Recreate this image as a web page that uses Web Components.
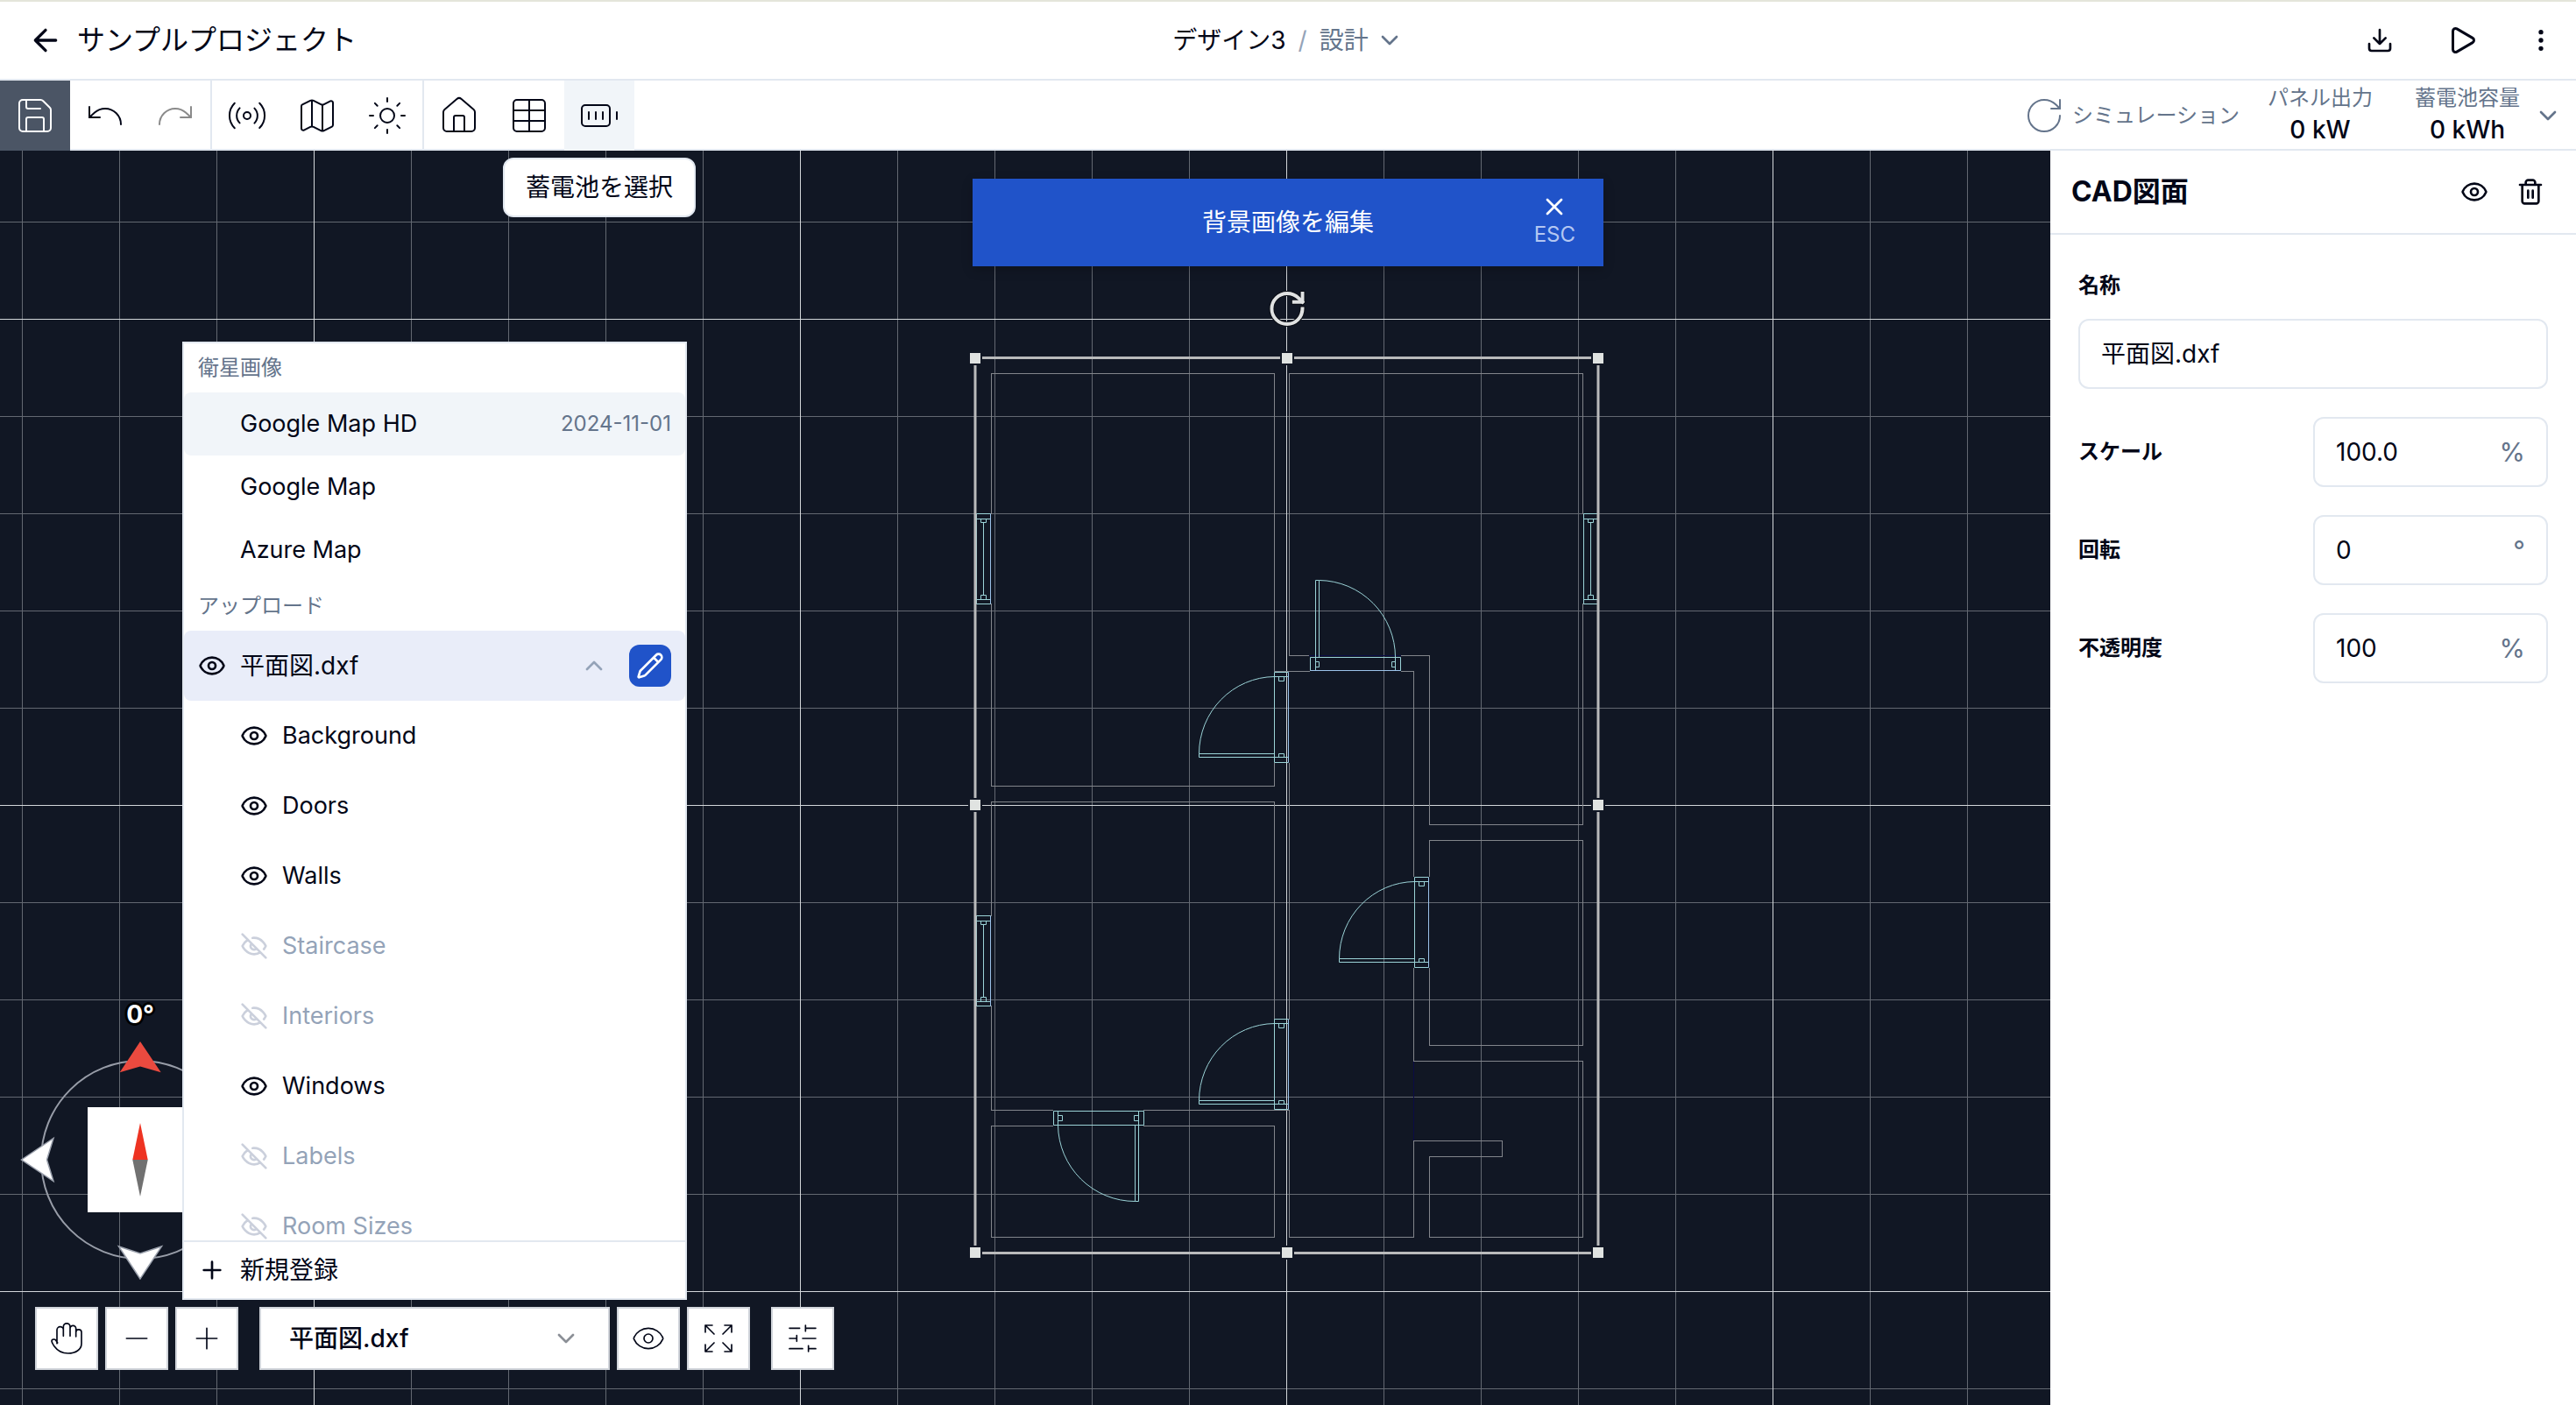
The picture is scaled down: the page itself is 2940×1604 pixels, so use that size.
<!DOCTYPE html>
<html lang="ja">
<head>
<meta charset="utf-8">
<title>サンプルプロジェクト</title>
<style>
  html, body { margin: 0; height: 100%; }
  body {
    --line: #e2e8f0;
    --muted: #64748b;
    --ink: #020617;
    --accent: #2053c9;
    --night: #111724;
    font-family: Inter, "Noto Sans CJK JP", sans-serif;
    font-size: 28px;
    line-height: 40px;
    color: var(--ink);
    background: #fff;
    overflow: hidden;
  }
</style>
</head>
<body>
<design-app></design-app>
<script>
const define = (name, html, setup) => {
  const tpl = document.createElement('template');
  tpl.innerHTML = html;
  customElements.define(name, class extends HTMLElement {
    constructor() {
      super();
      this.attachShadow({ mode: 'open' }).append(tpl.content.cloneNode(true));
    }
    connectedCallback() { if (setup) setup(this, this.shadowRoot); }
  });
};

const RESET = `*{box-sizing:border-box}
  button,input,select{font:inherit;color:inherit;margin:0;padding:0;border:0;background:none}
  button{display:flex;align-items:center;justify-content:center}
  h1,h2,p{margin:0;font:inherit}`;

const ICONS = {
  back: '<path d="m12 19-7-7 7-7M19 12H5"/>',
  chevronDown: '<path d="m6 9 6 6 6-6"/>',
  chevronUp: '<path d="m18 15-6-6-6 6"/>',
  download: '<path d="M21 15v4a2 2 0 0 1-2 2H5a2 2 0 0 1-2-2v-4M7 10l5 5 5-5M12 15V3"/>',
  play: '<path d="M5 5a2 2 0 0 1 3.008-1.728l11.997 6.998a2 2 0 0 1 .003 3.458l-12 7A2 2 0 0 1 5 19z"/>',
  more: '<circle cx="12" cy="5" r="1"/><circle cx="12" cy="12" r="1"/><circle cx="12" cy="19" r="1"/>',
  save: '<path d="M15.2 3a2 2 0 0 1 1.4.6l3.8 3.8a2 2 0 0 1 .6 1.4V19a2 2 0 0 1-2 2H5a2 2 0 0 1-2-2V5a2 2 0 0 1 2-2z"/><path d="M17 21v-7a1 1 0 0 0-1-1H8a1 1 0 0 0-1 1v7M7 3v4a1 1 0 0 0 1 1h7"/>',
  undo: '<path d="M3 7v6h6"/><path d="M21 17a9 9 0 0 0-9-9 9 9 0 0 0-6 2.3L3 13"/>',
  redo: '<path d="M21 7v6h-6"/><path d="M3 17a9 9 0 0 1 9-9 9 9 0 0 1 6 2.3l3 2.7"/>',
  radio: '<path d="M4.9 19.1C1 15.2 1 8.8 4.9 4.9M7.8 16.2c-2.3-2.3-2.3-6.1 0-8.5"/><circle cx="12" cy="12" r="2"/><path d="M16.2 7.8c2.3 2.3 2.3 6.1 0 8.5M19.1 4.9C23 8.8 23 15.1 19.1 19"/>',
  map: '<path d="M14.106 5.553a2 2 0 0 0 1.788 0l3.659-1.83A1 1 0 0 1 21 4.619v12.764a1 1 0 0 1-.553.894l-4.553 2.277a2 2 0 0 1-1.788 0l-4.212-2.106a2 2 0 0 0-1.788 0l-3.659 1.83A1 1 0 0 1 3 19.381V6.618a1 1 0 0 1 .553-.894l4.553-2.277a2 2 0 0 1 1.788 0zM15 5.764v15M9 3.236v15"/>',
  sun: '<circle cx="12" cy="12" r="4"/><path d="M12 2v2M12 20v2M4.93 4.93l1.41 1.41M17.66 17.66l1.41 1.41M2 12h2M20 12h2M6.34 17.66l-1.41 1.41M19.07 4.93l-1.41 1.41"/>',
  house: '<path d="M15 21v-8a1 1 0 0 0-1-1h-4a1 1 0 0 0-1 1v8"/><path d="M3 10a2 2 0 0 1 .709-1.528l7-5.999a2 2 0 0 1 2.582 0l7 5.999A2 2 0 0 1 21 10v9a2 2 0 0 1-2 2H5a2 2 0 0 1-2-2z"/>',
  table: '<rect x="3" y="3" width="18" height="18" rx="2"/><path d="M12 3v18M3 9h18M3 15h18"/>',
  battery: '<rect x="2" y="6" width="16" height="12" rx="2"/><path d="M6 10v4M10 10v4M14 10v4M22 10v4"/>',
  rotate: '<path d="M21 12a9 9 0 1 1-9-9c2.52 0 4.93 1 6.74 2.74L21 8"/><path d="M21 3v5h-5"/>',
  eye: '<path d="M2.062 12.348a1 1 0 0 1 0-.696 10.75 10.75 0 0 1 19.876 0 1 1 0 0 1 0 .696 10.75 10.75 0 0 1-19.876 0"/><circle cx="12" cy="12" r="3"/>',
  eyeOff: '<path d="M9.88 9.88a3 3 0 1 0 4.24 4.24M10.73 5.08A10.43 10.43 0 0 1 12 5c7 0 10 7 10 7a13.16 13.16 0 0 1-1.67 2.68M6.61 6.61A13.526 13.526 0 0 0 2 12s3 7 10 7a9.74 9.74 0 0 0 5.39-1.61M2 2l20 20"/>',
  trash: '<path d="M3 6h18M19 6v14c0 1-1 2-2 2H7c-1 0-2-1-2-2V6M8 6V4c0-1 1-2 2-2h4c1 0 2 1 2 2v2M10 11v6M14 11v6"/>',
  pencil: '<path d="M21.174 6.812a1 1 0 0 0-3.986-3.987L3.842 16.174a2 2 0 0 0-.5.83l-1.321 4.352a.5.5 0 0 0 .623.622l4.353-1.32a2 2 0 0 0 .83-.497zM15 5l4 4"/>',
  close: '<path d="M18 6 6 18M6 6l12 12"/>',
  plus: '<path d="M5 12h14M12 5v14"/>',
  minus: '<path d="M5 12h14"/>',
  expand: '<path d="m15 15 6 6M15 9l6-6M21 16.2V21h-4.8M21 7.8V3h-4.8M3 16.2V21h4.8M3 21l6-6M3 7.8V3h4.8M9 9 3 3"/>',
  sliders: '<path d="M10 5H3M12 19H3M14 3v4M16 17v4M21 12h-9M21 19h-5M21 5h-7M8 10v4M8 12H3"/>',
  hand: '<g transform="translate(1.2 1.2) scale(.2) translate(-115 -1140)" stroke-width="5"><path d="M136 1211V1165a11 11 0 0 1 22 0V1186M158 1166V1154a11.500 11.500 0 0 1 23 0V1186M181 1160a10 10 0 0 1 20 0V1188M201 1173a9.500 9.500 0 0 1 19 0V1212c0 20-20 33-46 33-24 0-37-10-47-24-6-9-9-15-9-19 0-5 10-7 14-2l6 9"/></g>'
};

/* <ui-icon name size stroke> : line icon on a 24-unit grid */
define('ui-icon', `<style>:host{display:block;flex:none}svg{display:block;fill:none;stroke:currentColor;stroke-linecap:round;stroke-linejoin:round}</style>`,
  (el, root) => {
    const size = el.getAttribute('size') || 32;
    root.querySelector('svg')?.remove();
    root.innerHTML += `<svg width="${size}" height="${size}" viewBox="0 0 24 24" stroke-width="${el.getAttribute('stroke') || 2}" aria-hidden="true">${ICONS[el.getAttribute('name')]}</svg>`;
  });

define('app-header', `<style>${RESET}
  :host{display:grid;grid-template-columns:1fr auto 1fr;align-items:center;height:92px;box-sizing:border-box;border-top:2px solid #e4e5da;border-bottom:2px solid var(--line);padding:0 24px}
  .left,.crumbs,.right{display:flex;align-items:center}
  .left{gap:16px;padding-left:8px}
  h1{font-size:32px}
  .crumbs{gap:14px}
  .sep{color:#94a3b8}
  .stage{gap:8px;color:var(--muted)}
  .right{justify-content:flex-end;gap:56px}
  .right button:first-child{margin-right:4px}
</style>
<div class="left"><button aria-label="戻る"><ui-icon name="back" size="40"></ui-icon></button><h1>サンプルプロジェクト</h1></div>
<nav class="crumbs"><span>デザイン3</span><span class="sep">/</span><button class="stage">設計<ui-icon name="chevronDown"></ui-icon></button></nav>
<div class="right">
  <button aria-label="ダウンロード"><ui-icon name="download"></ui-icon></button>
  <button aria-label="再生"><ui-icon name="play" size="36"></ui-icon></button>
  <button aria-label="メニュー"><ui-icon name="more"></ui-icon></button>
</div>`);

define('tool-button', `<style>${RESET}
  :host{display:block;position:relative}
  button{width:80px;height:80px}
  :host([kind=primary]) button{background:#4b5565;color:#fff}
  :host([kind=active]) button{background:#f1f5f9}
  :host([kind=off]) button{color:#8a8a8a}
  .tip{position:absolute;z-index:5;top:88px;left:50%;transform:translateX(-50%);white-space:nowrap;background:#fff;border:2px solid var(--line);border-radius:12px;padding:12px 24px}
  .tip:not(.on){display:none}
</style><button><ui-icon size="48" stroke="1"></ui-icon></button><div class="tip" role="tooltip"><slot></slot></div>`,
  (el, root) => {
    root.querySelector('ui-icon').setAttribute('name', el.getAttribute('icon'));
    root.querySelector('button').setAttribute('aria-label', el.getAttribute('label'));
    const icon = root.querySelector('ui-icon');
    icon.replaceWith(icon.cloneNode(true));
    root.querySelector('.tip').classList.toggle('on', el.hasAttribute('tip'));
  });

define('stat-item', `<style>:host{display:flex;flex-direction:column;align-items:center}
  .name{font-size:24px;line-height:32px;color:var(--muted)}
  .value{font-weight:500;line-height:40px}</style>
  <span class="name"><slot name="name"></slot></span><span class="value"><slot></slot></span>`);

define('tool-bar', `<style>${RESET}
  :host{display:flex;justify-content:space-between;height:80px;box-shadow:inset 0 -2px var(--line)}
  .tools,.group,.info{display:flex}
  .group + .group{border-left:2px solid var(--line)}
  .info{align-items:center;padding-right:16px}
  .sim{gap:8px;font-size:24px;color:var(--muted);margin-right:32px}
  .stats{display:flex;gap:48px;margin-right:16px}
  .more{color:var(--muted)}
</style>
<div class="tools">
  <div class="group"><tool-button icon="save" label="保存" kind="primary"></tool-button><tool-button icon="undo" label="元に戻す"></tool-button><tool-button icon="redo" label="やり直す" kind="off"></tool-button></div>
  <div class="group"><tool-button icon="radio" label="電波"></tool-button><tool-button icon="map" label="地図"></tool-button><tool-button icon="sun" label="日射"></tool-button></div>
  <div class="group"><tool-button icon="house" label="建物"></tool-button><tool-button icon="table" label="パネル"></tool-button><tool-button icon="battery" label="蓄電池" kind="active" tip>蓄電池を選択</tool-button></div>
</div>
<div class="info">
  <button class="sim"><ui-icon name="rotate" size="48" stroke="1"></ui-icon>シミュレーション</button>
  <div class="stats">
    <stat-item><span slot="name">パネル出力</span>0 kW</stat-item>
    <stat-item><span slot="name">蓄電池容量</span>0 kWh</stat-item>
  </div>
  <button class="more" aria-label="詳細"><ui-icon name="chevronDown"></ui-icon></button>
</div>`);

/* Drawing surface: grid, floor plan and selection frame. Plan units are page pixels. */
define('plan-canvas', `<style>:host{display:block;background:var(--night)}
  svg{display:block;width:100%;height:100%;fill:none}
  .thin{stroke:#636871}.bold{stroke:#d3d7da}
  .wall{stroke:#82858b}.hidden{stroke:#0b0b45}
  .open{stroke:#9bd3d7}.edge{stroke:#9cc2ea}
  .frame{stroke:#b9babb;stroke-width:3}
  .grip{fill:#e0e3e1}
</style>
<svg viewBox="0 172 2940 1432" preserveAspectRatio="xMidYMid slice" role="img" aria-label="平面図">
  <defs>
    <g id="door">
      <path class="open" d="M1454.500 767.500H1470.500M1454.500 870.500H1470.500M1454.500 772.500H1470.500M1368.500 864.500H1470.500M1368.500 860.500H1454.500M1368.500 864.500V860.500A87 88 0 0 1 1454.500 772.500M1459.500 772.500V777.500H1465.500V772.500M1459.500 864.500V860.500H1465.500V864.500M1454.500 767.500V870.500"/>
      <path class="edge" d="M1470.500 767.500V870.500"/>
    </g>
    <g id="window">
      <path class="open" d="M0 0H16M0 6H16M0 98H16M0 103H16M5 6V10H11V6M5 98V93H11V98M8 10V93M0 0V103"/>
      <path class="edge" d="M16 0V103"/>
    </g>
  </defs>
  <g id="grid" shape-rendering="crispEdges"></g>
  <path class="wall" shape-rendering="crispEdges" d="
    M1113 689.500H1131.500V897.500H1454.500V870.500M1131.500 586.500V426.500H1454.500V766.500H1494.500
    M1494.500 748.500H1471.500V426.500H1806.500V586.500M1824 689.500H1806.500V941.500H1631.500V748.500H1599
    M1599 766.500H1613.500V1000.500M1631.500 1000.500V959.500H1806.500V1193.500H1631.500V1104.500
    M1613.500 1104.500V1211.500H1806.500V1412.500H1631.500V1320.500H1714.500V1302.500H1613.500V1412.500H1471.500V1267.500
    M1471.500 870.500V1163.500M1454.500 1163.500V915.500H1131.500V1045.500H1113
    M1113 1148.500H1131.500V1267.500H1202M1305 1267.500H1471.500
    M1202 1285.500H1131.500V1412.500H1454.500V1285.500H1305"/>
  <path class="hidden" shape-rendering="crispEdges" d="M1613.500 1212V1302M1494 748.500H1599"/>
  <use href="#door"/><use href="#door" x="160" y="234"/><use href="#door" y="396"/>
  <use href="#window" x="1114.500" y="586.500"/><use href="#window" x="1807.500" y="586.500"/><use href="#window" x="1114.500" y="1045.500"/>
  <path class="open" d="M1495.500 750.500H1598.500V765.500H1495.500ZM1501.500 765.500V662.500H1505.500V750.500M1592.500 765.500V750.500A88 88 0 0 0 1505.500 662.500M1501.500 755.500H1505.500V761.500H1501.500M1592.500 755.500H1588.500V761.500H1592.500
    M1202.500 1268.500H1305.500V1284.500H1202.500ZM1299.500 1268.500V1371.500H1295.500V1284.500M1207.500 1268.500V1284.500A88 88 0 0 0 1295.500 1371.500M1207.500 1273.500H1212.500V1279.500H1207.500M1299.500 1273.500H1294.500V1279.500H1299.500"/>
  <path class="edge" d="M1495.500 765.500H1598.500"/>
  <rect class="frame" x="1113" y="408.500" width="711" height="1022"/>
  <g id="grips"></g>
  <g transform="translate(1469 352.500) scale(1.950) translate(-12 -12)" stroke-linecap="square" stroke-linejoin="round">
    <g stroke="#0a0d14" stroke-width="3">${ICONS.rotate}</g><g stroke="#e0e2e2" stroke-width="2">${ICONS.rotate}</g>
  </g>
</svg>`, (el, root) => {
  let thin = '', bold = '';
  for (let k = -13; k <= 13; k++) {
    const x = Math.floor(1468.5 + 111.02 * k) + 0.5;
    const y = Math.floor(919.35 + 111.05 * k) + 0.5;
    const v = `M${x} 0V1700`, h = `M0 ${y}H2940`;
    if (k % 5 === 0) bold += v + h; else thin += v + h;
  }
  root.getElementById('grid').innerHTML = `<path class="thin" d="${thin}"/><path class="bold" d="${bold}"/>`;
  let grips = '';
  for (const [x, y] of [[1113, 409], [1469, 409], [1824, 409], [1113, 919], [1824, 919], [1113, 1430], [1469, 1430], [1824, 1430]])
    grips += `<rect x="${x - 8}" y="${y - 8}" width="16" height="16" fill="#111724"/><rect class="grip" x="${x - 6}" y="${y - 6}" width="12" height="12"/>`;
  root.getElementById('grips').innerHTML = grips;
});

define('edit-banner', `<style>${RESET}
  :host{display:grid;grid-template-columns:1fr auto 1fr;align-items:center;width:720px;height:100px;background:var(--accent);color:#fff;box-sizing:border-box;padding:0 32px;box-shadow:0 4px 12px #0003}
  p{grid-column:2}
  button{justify-self:end;flex-direction:column;padding-bottom:4px}
  .key{font-size:24px;line-height:32px;color:#b4c7f2}
</style><p>背景画像を編集</p><button><ui-icon name="close"></ui-icon><span class="key">ESC</span></button>`);

define('compass-dial', `<style>:host{display:flex;flex-direction:column;align-items:center;width:274px}
  .deg{font-weight:700;color:#fff;text-shadow:-2px -2px 0 #000,2px -2px 0 #000,-2px 2px 0 #000,2px 2px 0 #000,0 3px 0 #000,0 -3px 0 #000,3px 0 0 #000,-3px 0 0 #000}
  svg{display:block;margin-top:8px}</style>
<span class="deg">0°</span>
<svg width="274" height="276" viewBox="23 1186 274 276">
  <circle cx="160" cy="1324" r="113" fill="none" stroke="#989da8" stroke-width="2"/>
  <path fill="#eb4a3f" d="M160 1189 183.700 1224.300 160 1217.500 136.700 1224.300Z"/>
  <g fill="#fff" stroke="#9aa0ac" stroke-width="1.500">
    <path d="M24.500 1324 61 1299.500 53.500 1324 61 1348.500Z"/><path d="M296 1324 259 1299.500 266.500 1324 259 1348.500Z"/><path d="M160 1460 135.500 1423 160 1431 184.500 1423Z"/>
  </g>
  <rect x="100" y="1264" width="120" height="120" fill="#fff"/>
  <path fill="#ee3322" d="M160 1282 168.700 1324H151.300Z"/><path fill="#717171" d="M160 1366 168.700 1324H151.300Z"/>
</svg>`);

define('layer-row', `<style>${RESET}
  :host{display:flex;align-items:center;flex:none;height:80px;padding:0 16px;box-sizing:border-box;border-radius:8px}
  :host([kind=map]){height:72px;padding-left:64px;font-size:27px}
  :host([kind=map][hover]){background:#f1f5f9}
  :host([kind=file]){background:#e9edf9}
  :host([kind=layer]){padding-left:64px;font-size:27px}
  :host([off]){color:#94a3b8}
  .vis{margin-right:16px}
  :host([off]) .vis{color:#cbd0dc}
  :host([kind=map]) .vis{display:none}
  .end{margin-left:auto;display:flex;align-items:center}
</style><button class="vis"></button><slot></slot><span class="end"><slot name="end"></slot></span>`,
  (el, root) => {
    const vis = root.querySelector('.vis');
    const off = el.hasAttribute('off');
    vis.setAttribute('aria-label', off ? '表示' : '非表示');
    vis.innerHTML = `<ui-icon name="${off ? 'eyeOff' : 'eye'}"></ui-icon>`;
  });

define('layer-menu', `<style>${RESET}
  :host{display:flex;flex-direction:column;width:576px;height:1094px;box-sizing:border-box;background:#fff;border:2px solid var(--line)}
  .list{flex:1;min-height:0;overflow:hidden;display:flex;flex-direction:column}
  h2{flex:none;font-size:24px;line-height:56px;padding:0 16px;color:var(--muted)}
  .date{font-size:24px;color:var(--muted)}
  .fold{color:#94a3b8;margin-right:24px}
  .edit{width:48px;height:48px;border-radius:12px;background:var(--accent);color:#fff}
  .new{height:66px;flex:none;justify-content:flex-start;gap:16px;padding:0 16px;border-top:2px solid var(--line)}
</style>
<div class="list">
  <h2>衛星画像</h2>
  <layer-row kind="map" hover>Google Map HD<span slot="end" class="date">2024-11-01</span></layer-row>
  <layer-row kind="map">Google Map</layer-row>
  <layer-row kind="map">Azure Map</layer-row>
  <h2>アップロード</h2>
  <layer-row kind="file">平面図.dxf<button slot="end" class="fold" aria-label="折りたたむ"><ui-icon name="chevronUp"></ui-icon></button><button slot="end" class="edit" aria-label="編集"><ui-icon name="pencil"></ui-icon></button></layer-row>
  <layer-row kind="layer">Background</layer-row>
  <layer-row kind="layer">Doors</layer-row>
  <layer-row kind="layer">Walls</layer-row>
  <layer-row kind="layer" off>Staircase</layer-row>
  <layer-row kind="layer" off>Interiors</layer-row>
  <layer-row kind="layer">Windows</layer-row>
  <layer-row kind="layer" off>Labels</layer-row>
  <layer-row kind="layer" off>Room Sizes</layer-row>
</div>
<button class="new"><ui-icon name="plus"></ui-icon>新規登録</button>`);

define('view-dock', `<style>${RESET}
  :host{display:flex;gap:24px}
  .set{display:flex;gap:8px}
  .set > button,.pick{height:72px;background:#fff;border:2px solid #d1d5db}
  .set > button{width:72px}
  .pick{display:grid;width:400px;align-items:center}
  .pick > *{grid-area:1/1}
  select{appearance:none;height:68px;padding-left:32px;font-weight:500}
  .pick ui-icon{justify-self:end;margin-right:32px;color:#8b8f96;pointer-events:none}
</style>
<div class="set">
  <button aria-label="移動"><ui-icon name="hand" size="40" stroke="1"></ui-icon></button>
  <button aria-label="縮小"><ui-icon name="minus" size="40" stroke="1"></ui-icon></button>
  <button aria-label="拡大"><ui-icon name="plus" size="40" stroke="1"></ui-icon></button>
</div>
<div class="set">
  <div class="pick"><select aria-label="背景"><option>平面図.dxf</option></select><ui-icon name="chevronDown"></ui-icon></div>
  <button aria-label="表示"><ui-icon name="eye" size="40" stroke="1"></ui-icon></button>
  <button aria-label="全体表示"><ui-icon name="expand" size="40" stroke="1"></ui-icon></button>
</div>
<div class="set"><button aria-label="設定"><ui-icon name="sliders" size="40" stroke="1"></ui-icon></button></div>`);

define('field-row', `<style>${RESET}
  :host{display:flex;align-items:center;justify-content:space-between}
  :host([wide]){flex-direction:column;align-items:stretch;gap:18px}
  label{font-size:24px;font-weight:600}
  .box{display:flex;align-items:center;width:50%;height:80px;padding:0 24px;border:2px solid var(--line);border-radius:12px}
  :host([wide]) .box{width:100%}
  input{flex:1;min-width:0;width:0;height:40px;outline:0}
  .unit{font-size:30px;color:var(--muted)}
</style><label for="f"><slot></slot></label><div class="box"><input id="f" type="text"><span class="unit"></span></div>`,
  (el, root) => {
    root.querySelector('input').value = el.getAttribute('value');
    root.querySelector('.unit').textContent = el.getAttribute('unit') || '';
  });

define('property-panel', `<style>${RESET}
  :host{display:block;width:600px;background:#fff}
  header{display:flex;align-items:center;height:96px;border-bottom:2px solid var(--line);padding:0 20px 0 24px}
  h2{flex:1;font-size:32px;font-weight:700}
  header button{width:64px;height:64px}
  .fields{display:flex;flex-direction:column;gap:32px;padding:38px 32px}
</style>
<header><h2>CAD図面</h2><button aria-label="表示"><ui-icon name="eye"></ui-icon></button><button aria-label="削除"><ui-icon name="trash"></ui-icon></button></header>
<div class="fields">
  <field-row wide value="平面図.dxf">名称</field-row>
  <field-row value="100.0" unit="%">スケール</field-row>
  <field-row value="0" unit="°">回転</field-row>
  <field-row value="100" unit="%">不透明度</field-row>
</div>`);

define('design-app', `<style>
  :host{display:flex;flex-direction:column;height:100vh}
  .work{flex:1;min-height:0;display:grid;grid-template:minmax(0,1fr)/minmax(0,1fr);position:relative}
  .work > *{grid-area:1/1;min-height:0}
  property-panel{justify-self:end;z-index:2}
  edit-banner{justify-self:center;align-self:start;margin-top:32px;z-index:1}
  compass-dial{position:absolute;left:23px;bottom:142px}
  layer-menu{position:absolute;left:208px;bottom:120px}
  view-dock{position:absolute;left:40px;bottom:40px}
</style>
<app-header></app-header>
<tool-bar></tool-bar>
<main class="work">
  <plan-canvas></plan-canvas>
  <edit-banner></edit-banner>
  <compass-dial></compass-dial>
  <layer-menu></layer-menu>
  <view-dock></view-dock>
  <property-panel></property-panel>
</main>`);
</script>
</body>
</html>
